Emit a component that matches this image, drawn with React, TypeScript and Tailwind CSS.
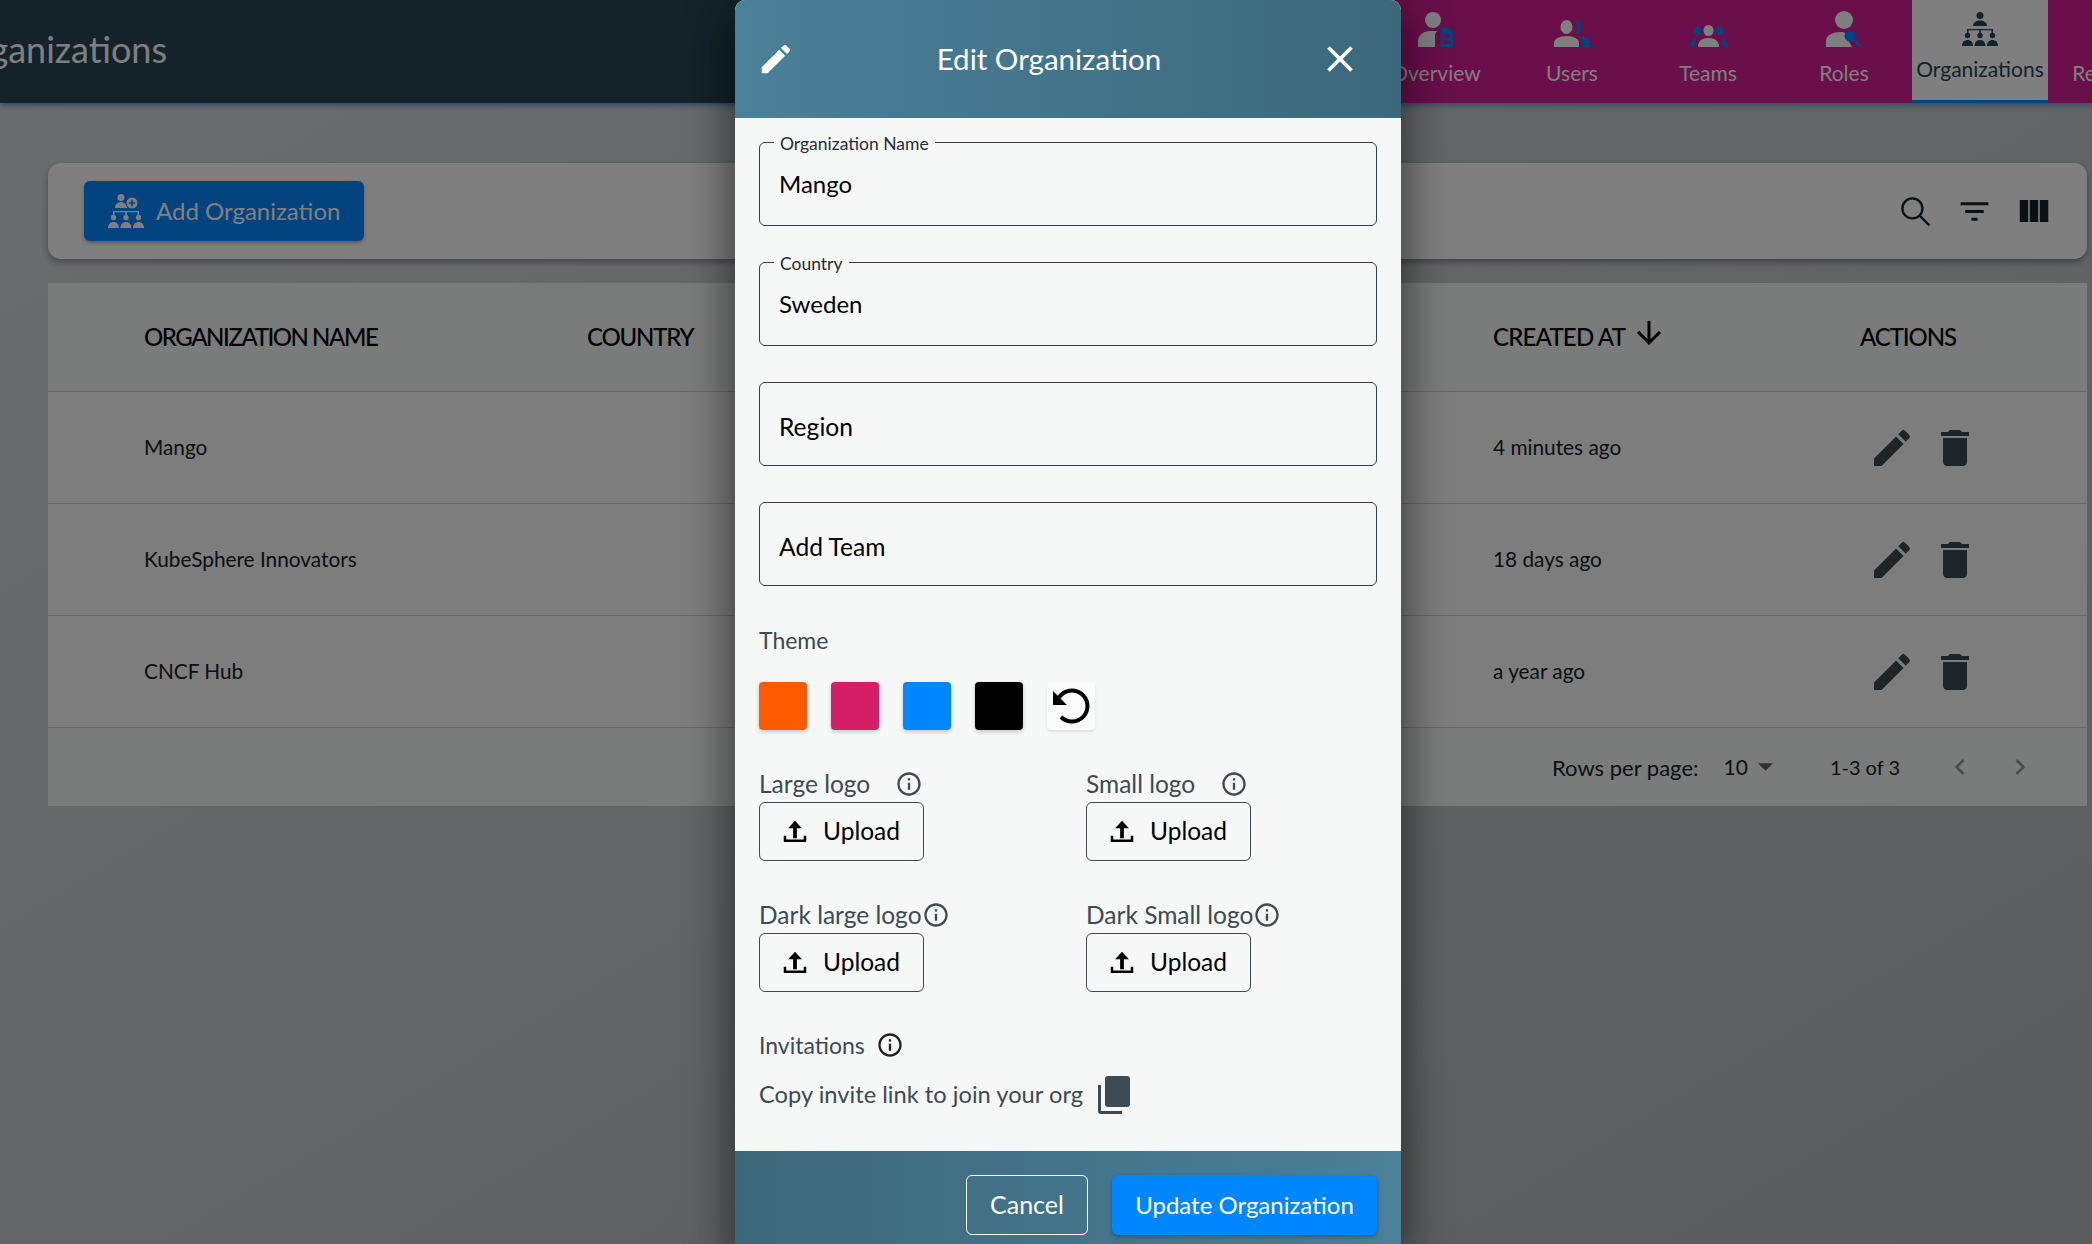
import { ReactNode } from "react";

const font = "font-['Lato','Open_Sans',sans-serif]";

const Pencil = ({ className = "" }: { className?: string }) => (
  <svg viewBox="0 0 24 24" className={className} fill="currentColor">
    <path d="M3 17.25V21h3.75L17.81 9.94l-3.75-3.75L3 17.25zM20.71 7.04c.39-.39.39-1.02 0-1.41l-2.34-2.34a.996.996 0 0 0-1.41 0l-1.83 1.83 3.75 3.75 1.83-1.83z" />
  </svg>
);

const Trash = ({ className = "" }: { className?: string }) => (
  <svg viewBox="0 0 24 24" className={className} fill="currentColor">
    <path d="M6 19c0 1.1.9 2 2 2h8c1.1 0 2-.9 2-2V7H6v12zM19 4h-3.5l-1-1h-5l-1 1H5v2h14V4z" />
  </svg>
);

const Info = ({ className = "" }: { className?: string }) => (
  <svg viewBox="0 0 24 24" className={className} fill="currentColor">
    <path d="M11 7h2v2h-2zm0 4h2v6h-2zm1-9C6.48 2 2 6.48 2 12s4.48 10 10 10 10-4.48 10-10S17.52 2 12 2zm0 18c-4.41 0-8-3.59-8-8s3.59-8 8-8 8 3.59 8 8-3.59 8-8 8z" />
  </svg>
);

const UploadIcon = () => (
  <svg viewBox="0 0 24 24" className="size-[30px] text-black" fill="currentColor">
    <path d="M5 20h14v-2H5v2zM5 15H3v5h2v-5zm16 0h-2v5h2v-5zM12 3 6.5 9h4v8h3V9h4L12 3z" />
  </svg>
);

// people + tree used for the organization entries
const OrgIcon = ({ className = "", plus = false }: { className?: string; plus?: boolean }) => (
  <svg viewBox="0 0 36 34" className={className} fill="currentColor">
    <circle cx={plus ? 13 : 18} cy="3.5" r="3.5" />
    <path d={plus ? "M7 14c0-4 3-6 6-6s6 2 6 6z" : "M11 14c0-3.500 3-5.500 7-5.500s7 2 7 5.500z"} />
    <path d="M5 21v-4h26v4h-1.500v-2.700H18.800V21h-1.600v-2.700H6.500V21z" />
    <circle cx="5.500" cy="23.500" r="2.700" />
    <circle cx="18" cy="23.500" r="2.700" />
    <circle cx="30.500" cy="23.500" r="2.700" />
    <path d="M0 34c0-4 2.500-6 5.500-6s5.500 2 5.500 6zM12.500 34c0-4 2.500-6 5.500-6s5.500 2 5.500 6zM25 34c0-4 2.500-6 5.500-6s5.500 2 5.500 6z" />
    {plus && (
      <>
        <circle cx="24" cy="9" r="6" fill="#fff" stroke="#0086ff" strokeWidth="1" />
        <path d="M23.200 5.800h1.600v2.400h2.400v1.600h-2.400v2.400h-1.600V9.800h-2.400V8.200h2.400z" fill="#0086ff" />
      </>
    )}
  </svg>
);

const OverviewIcon = () => (
  <svg viewBox="0 0 36 35" className="h-[35px] w-[36px]">
    <circle cx="15" cy="8" r="8" fill="#fff" />
    <path d="M0 35v-6c0-6 6-10 12-10h8c-2 1-3 2-3 4v12z" fill="#fff" />
    <path d="M23 16h8v3h4v16H23z" fill="#0086ff" />
    <circle cx="29" cy="24" r="2.500" fill="#d41e94" />
    <path d="M25 32c0-3 2-4 4-4s4 1 4 4z" fill="#d41e94" />
  </svg>
);

const UsersIcon = () => (
  <svg viewBox="0 0 37 27" className="h-[27px] w-[37px]">
    <ellipse cx="12.500" cy="7" rx="6" ry="7" fill="#fff" />
    <path d="M21 0c4 0 6 3 6 7s-2 7-6 7c2-2 3-4.500 3-7s-1-5-3-7z" fill="#0086ff" />
    <path d="M0 27v-4c0-4 5-7 12.500-7S25 19 25 23v4z" fill="#fff" />
    <path d="M25 16c6 0 12 3 12 11h-9c0-4-1-8-3-11z" fill="#0086ff" />
  </svg>
);

const TeamsIcon = () => (
  <svg viewBox="0 0 37 22" className="h-[22px] w-[37px]">
    <ellipse cx="7.500" cy="6" rx="3.500" ry="4.500" fill="#0086ff" />
    <ellipse cx="29.500" cy="6" rx="3.500" ry="4.500" fill="#0086ff" />
    <ellipse cx="18.500" cy="5.500" rx="5" ry="5.500" fill="#fff" />
    <path d="M8 22c0-6 4-9 10.500-9S29 16 29 22z" fill="#fff" />
    <path d="M0 22c0-5 2-8 6-9-1 3-2 6-2 9zM37 22c0-5-2-8-6-9 1 3 2 6 2 9z" fill="#0086ff" />
  </svg>
);

const RolesIcon = () => (
  <svg viewBox="0 0 37 36" className="h-[36px] w-[37px]">
    <ellipse cx="18" cy="9" rx="9" ry="9" fill="#fff" />
    <path d="M0 36v-6c0-6 7-9 15-9 2 0 3 0 4 1 0 3 2 5 3 7l4 7z" fill="#fff" />
    <circle cx="24" cy="25" r="5.500" fill="#0086ff" />
    <path d="M27 26l9 9-2 1-9-8z" fill="#0086ff" />
  </svg>
);

const tabs: { label: string; icon: ReactNode }[] = [
  { label: "Overview", icon: <OverviewIcon /> },
  { label: "Users", icon: <UsersIcon /> },
  { label: "Teams", icon: <TeamsIcon /> },
  { label: "Roles", icon: <RolesIcon /> },
];

const rows = [
  { name: "Mango", created: "4 minutes ago" },
  { name: "KubeSphere Innovators", created: "18 days ago" },
  { name: "CNCF Hub", created: "a year ago" },
];

const TopBar = () => (
  <header className="flex h-[103px] w-full shrink-0 shadow-[0_3px_5px_#6d9ccb]">
    <div className="flex min-w-0 flex-1 items-center bg-[#264653]">
      <div className="mb-[5px] flex w-[167px] justify-end overflow-hidden">
        <span className="whitespace-nowrap text-[36px] text-white">Organizations</span>
      </div>
    </div>
    <nav className="flex w-[724px] overflow-hidden bg-[#d41e94]">
      {tabs.map((t) => (
        <div key={t.label} className="flex w-[136px] shrink-0 flex-col items-center">
          <div className="flex h-[47px] items-end">{t.icon}</div>
          <span className="mt-[10px] text-[21px] text-white">{t.label}</span>
        </div>
      ))}
      <div className="flex w-[136px] shrink-0 flex-col items-center border-b-[3px] border-[#0086ff] bg-white text-[#264653]">
        <OrgIcon className="mt-[12px] h-[34px] w-[36px]" />
        <span className="mt-[7px] text-[21px]">Organizations</span>
      </div>
      <div className="flex w-[136px] shrink-0 flex-col items-center pl-[6px] pt-[57px]">
        <span className="text-[21px] text-white">Resources</span>
      </div>
    </nav>
  </header>
);

const Toolbar = () => (
  <div className="flex h-[96px] items-center justify-between rounded-[13px] bg-white pl-[36px] pr-[34px] shadow-[0_3px_6px_rgba(0,0,0,0.35)]">
    <button className="flex h-[60px] w-[280px] items-center gap-[12px] rounded-[6px] bg-[#0086ff] pl-[24px] text-[24px] text-white shadow-[0_2px_4px_rgba(0,0,0,0.3)]">
      <OrgIcon plus className="h-[34px] w-[36px]" />
      Add Organization
    </button>
    <div className="flex items-center gap-[22px] text-[#13232b]">
      <svg viewBox="0 0 24 24" className="size-[37px]" fill="none" stroke="currentColor" strokeWidth="1.500">
        <circle cx="10" cy="10" r="6.500" />
        <path d="M15 15l6 6" />
      </svg>
      <svg viewBox="0 0 24 24" className="size-[37px]" fill="currentColor">
        <path d="M10 18h4v-2h-4v2zM3 6v2h18V6H3zm3 7h12v-2H6v2z" />
      </svg>
      <svg viewBox="0 0 24 24" className="size-[38px]" fill="currentColor">
        <path d="M14.670 5v14H9.330V5h5.340zm1 14H21V5h-5.330v14zm-7.340 0V5H3v14h5.330z" />
      </svg>
    </div>
  </div>
);

const Table = () => (
  <div className="mt-[24px] bg-[#fafafa] text-[#13232b]">
    <div className="flex h-[109px] items-center border-b border-[#cfcfcf] bg-[#f5f7f6] text-[24px] font-medium text-black">
      <span className="ml-[96px] w-[443px] tracking-[-1.45px]">ORGANIZATION NAME</span>
      <span className="w-[906px] tracking-[-1.2px]">COUNTRY</span>
      <span className="flex w-[367px] items-center gap-[6px] tracking-[-0.8px]">
        CREATED AT
        <svg viewBox="0 0 24 24" className="mb-[9px] size-[36px]" fill="currentColor">
          <path d="M20 12l-1.410-1.410L13 16.170V4h-2v12.170l-5.580-5.590L4 12l8 8 8-8z" />
        </svg>
      </span>
      <span className="tracking-[-1.1px]">ACTIONS</span>
    </div>
    {rows.map((r) => (
      <div key={r.name} className="flex h-[112px] items-center border-b border-[#cfcfcf] text-[20.8px]">
        <span className="mb-[2px] ml-[96px] w-[1349px]">{r.name}</span>
        <span className="mb-[2px] w-[375px]">{r.created}</span>
        <Pencil className="size-[48px] text-[#3c4a52]" />
        <Trash className="ml-[15px] size-[48px] text-[#3c4a52]" />
      </div>
    ))}
    <div className="flex h-[78px] items-center bg-[#f5f7f6] text-[22px]">
      <span className="ml-[1504px]">Rows per page:</span>
      <span className="ml-[25px] text-[21px]">10</span>
      <svg viewBox="0 0 10 5" className="ml-[10px] h-[8px] w-[15px] text-[#5a5f62]" fill="currentColor">
        <path d="M0 0h10L5 5z" />
      </svg>
      <span className="ml-[57px] text-[20px]">1-3 of 3</span>
      <svg viewBox="0 0 24 24" className="ml-[44px] size-[32px] text-[#999]" fill="currentColor">
        <path d="M15.410 7.410 14 6l-6 6 6 6 1.410-1.410L10.830 12z" />
      </svg>
      <svg viewBox="0 0 24 24" className="ml-[28px] size-[32px] text-[#999]" fill="currentColor">
        <path d="M10 6 8.590 7.410 13.170 12l-4.580 4.590L10 18l6-6z" />
      </svg>
    </div>
  </div>
);

const Field = ({ label, value }: { label?: string; value: string }) => (
  <div
    className={`relative flex h-[84px] items-center rounded-[6px] border border-[#2f3f48] pl-[19px] text-black ${
      label ? "text-[24px]" : "pt-[6px] text-[24.6px]"
    }`}
  >
    {label && (
      <span className="absolute -top-[10px] left-[14px] bg-[#f6f8f8] px-[6px] text-[17.5px] leading-[22px] text-[#1f2d34]">
        {label}
      </span>
    )}
    {value}
  </div>
);

const UploadField = ({ label, spaced = false }: { label: string; spaced?: boolean }) => (
  <div>
    <div className={`flex h-[32px] items-center text-[24.5px] text-[#3c4a52] ${spaced ? "gap-[25px]" : ""}`}>
      {label}
      <Info className="size-[28px] shrink-0" />
    </div>
    <button className="mt-[2px] flex h-[59px] w-[165px] items-center gap-[13px] rounded-[6px] border border-[#3c4a52] pl-[20px] text-[24.500px] leading-none text-black">
      <UploadIcon />
      Upload
    </button>
  </div>
);

const Modal = () => (
  <div className="absolute left-[735px] top-0 flex h-[1244px] w-[666px] flex-col overflow-hidden rounded-t-[10px] bg-[#f6f8f8] shadow-[0_24px_38px_3px_rgba(0,0,0,0.3),0_9px_46px_8px_rgba(0,0,0,0.25)]">
    <div className="flex h-[118px] shrink-0 items-center justify-between bg-gradient-to-r from-[#4b8099] to-[#3c687b] pl-[22px] pr-[39px] text-white">
      <Pencil className="size-[38px]" />
      <h2 className="mr-[15px] text-[29.500px] font-normal">Edit Organization</h2>
      <svg viewBox="0 0 24 24" className="size-[44px]" fill="currentColor">
        <path d="M19 6.410 17.590 5 12 10.590 6.410 5 5 6.410 10.590 12 5 17.590 6.410 19 12 13.410 17.590 19 19 17.590 13.410 12z" />
      </svg>
    </div>
    <div className="flex-1 px-[24px] pt-[24px]">
      <div className="flex flex-col gap-[36px]">
        <Field label="Organization Name" value="Mango" />
        <Field label="Country" value="Sweden" />
        <Field value="Region" />
        <Field value="Add Team" />
      </div>
      <p className="mt-[38px] text-[23px] leading-[32px] text-[#3c4a52]">Theme</p>
      <div className="mt-[26px] flex gap-[24px]">
        <div className="size-[48px] rounded-[4px] bg-[#ff5a00] shadow-[0_2px_4px_rgba(0,0,0,0.2)]" />
        <div className="size-[48px] rounded-[4px] bg-[#d41e66] shadow-[0_2px_4px_rgba(0,0,0,0.2)]" />
        <div className="size-[48px] rounded-[4px] bg-[#0086ff] shadow-[0_2px_4px_rgba(0,0,0,0.2)]" />
        <div className="size-[48px] rounded-[4px] bg-black shadow-[0_2px_4px_rgba(0,0,0,0.2)]" />
        <div className="size-[48px] rounded-[4px] bg-[#fafafa] shadow-[0_2px_3px_rgba(0,0,0,0.1)]">
          <svg viewBox="0 0 48 48" className="size-[48px] text-black">
            <path d="M12 15.500A15.500 15.500 0 1 1 14 35" fill="none" stroke="currentColor" strokeWidth="4" />
            <path d="M6 9v14h14z" fill="currentColor" />
          </svg>
        </div>
      </div>
      <div className="mt-[38px] grid grid-cols-[327px_1fr] gap-y-[38px]">
        <UploadField label="Large logo" spaced />
        <UploadField label="Small logo" spaced />
        <UploadField label="Dark large logo" />
        <UploadField label="Dark Small logo" />
      </div>
      <div className="mt-[37px] flex h-[32px] items-center gap-[11px] text-[23px] text-[#3c4a52]">
        Invitations
        <Info className="size-[28px] text-[#1f1f1f]" />
      </div>
      <div className="mt-[15px] flex h-[38px] items-center gap-[15px] text-[23.700px] text-[#3c4a52]">
        Copy invite link to join your org
        <svg viewBox="0 0 32 38" className="h-[38px] w-[32px] text-[#3c4a52]" fill="currentColor">
          <rect x="7" y="0" width="25" height="31" rx="3" />
          <path d="M0 9h3v26h21v3H3a3 3 0 0 1-3-3z" />
        </svg>
      </div>
    </div>
    <div className="flex h-[93px] shrink-0 items-start justify-end gap-[24px] bg-gradient-to-r from-[#3c687b] to-[#4b8099] pr-[24px] pt-[24px]">
      <button className="h-[60px] w-[122px] rounded-[6px] border border-white text-[25px] text-white">Cancel</button>
      <button className="h-[60px] w-[265px] rounded-[6px] bg-[#0086ff] text-[24px] text-white shadow-[0_2px_4px_rgba(0,0,0,0.3)]">
        Update Organization
      </button>
    </div>
  </div>
);

export default function App() {
  return (
    <div className={`relative h-[1244px] w-full overflow-hidden bg-gradient-to-br from-[#d6dcde] to-[#b4b8bb] ${font}`}>
      <TopBar />
      <main className="pl-[48px] pr-[5px] pt-[60px]">
        <Toolbar />
        <Table />
      </main>
      <div className="absolute inset-0 bg-black/50" />
      <Modal />
    </div>
  );
}
